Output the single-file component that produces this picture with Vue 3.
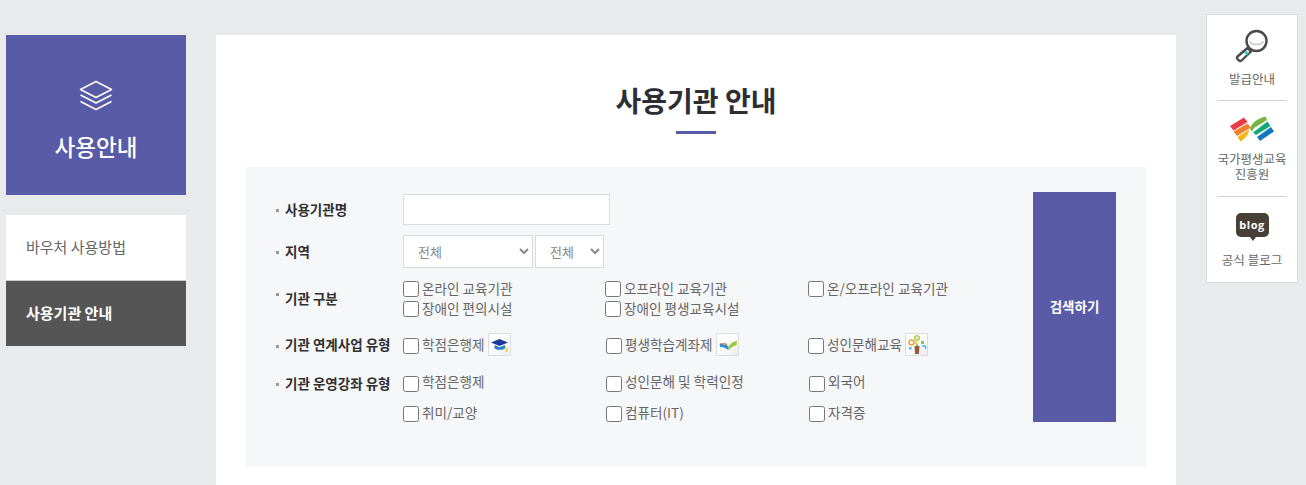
<script setup>
const types = [
  ['온라인 교육기관', '오프라인 교육기관', '온/오프라인 교육기관'],
  ['장애인 편의시설', '장애인 평생교육시설', '']
]
const courses = [
  ['학점은행제', '성인문해 및 학력인정', '외국어'],
  ['취미/교양', '컴퓨터(IT)', '자격증']
]
</script>

<template>
  <div class="page">
    <aside class="side">
      <div class="side-head">
        <svg class="layers" width="36" height="32" viewBox="0 0 36 32" fill="none" stroke="#fff" stroke-width="1.5" stroke-linejoin="round">
          <path d="M18 1.5 33.5 9.5 18 17.5 2.5 9.5Z" />
          <path d="M2.5 15 18 23 33.5 15" />
          <path d="M2.5 21.5 18 29.5 33.5 21.5" />
        </svg>
        <h2>사용안내</h2>
      </div>
      <nav class="side-nav">
        <a class="nav-item">바우처 사용방법</a>
        <a class="nav-item active">사용기관 안내</a>
      </nav>
    </aside>

    <main class="content">
      <h1>사용기관 안내</h1>
      <div class="rule"></div>
      <section class="panel">
        <form class="fields" @submit.prevent>
          <div class="row row-name">
            <label class="lab">사용기관명</label>
            <input class="text-input" type="text" />
          </div>
          <div class="row row-area">
            <label class="lab">지역</label>
            <div class="selects">
              <select class="sel sel-a"><option>전체</option></select>
              <select class="sel sel-b"><option>전체</option></select>
            </div>
          </div>
          <div class="row row-type">
            <label class="lab lab-type">기관 구분</label>
            <div class="opts">
              <div v-for="(r, i) in types" :key="i" class="opt-row type-row">
                <label v-for="(t, j) in r" :key="j" class="opt">
                  <template v-if="t"><input type="checkbox" /><span>{{ t }}</span></template>
                </label>
              </div>
            </div>
          </div>
          <div class="row row-link">
            <label class="lab">기관 연계사업 유형</label>
            <div class="opt-row link-row">
              <label class="opt">
                <input type="checkbox" /><span>학점은행제</span>
                <i class="tile">
                  <svg width="21" height="21" viewBox="0 0 21 21">
                    <path d="M2 8.500 10.500 5 19 8.500 10.500 12Z" fill="#1a3a9a" />
                    <path d="M5.500 11v3.200c2 2 8.500 2 10.500 0V11l-5.500 2.200Z" fill="#2c7cc8" />
                    <rect x="16.500" y="13" width="2" height="5" fill="#f2d04e" />
                  </svg>
                </i>
              </label>
              <label class="opt">
                <input type="checkbox" /><span>평생학습계좌제</span>
                <i class="tile">
                  <svg width="21" height="21" viewBox="0 0 21 21">
                    <path d="M2.500 9.500 7 9 11.500 12.500 11.500 16 7 13.500 3 13Z" fill="#2a8fd4" />
                    <path d="M4 9.300 7 8.800 10 11 6.500 11Z" fill="#f0a030" />
                    <path d="M7.500 9 9.500 9.800 10 11 8 10.500Z" fill="#e0508a" />
                    <path d="M11.500 12.500 14.500 9 20 6.500 19.500 11 15 13 11.500 16Z" fill="#9cc83c" />
                  </svg>
                </i>
              </label>
              <label class="opt">
                <input type="checkbox" /><span>성인문해교육</span>
                <i class="tile">
                  <svg width="21" height="21" viewBox="0 0 21 21">
                    <path d="M8.500 12h5l-.6 8h-3.800Z" fill="#9a5a34" />
                    <path d="M10 10.500 12 10.500 11.500 12.500 10.500 12.500Z" fill="#6b8f3a" />
                    <circle cx="5.500" cy="8.500" r="2.500" fill="none" stroke="#f0a83c" stroke-width="1.600" />
                    <circle cx="11" cy="4" r="2.200" fill="none" stroke="#a8d050" stroke-width="1.600" />
                    <rect x="15" y="7" width="3" height="3" fill="#8cc63f" />
                    <rect x="9" y="7.500" width="2.500" height="2.500" fill="#f2d04e" />
                    <path d="M16 12h3.500v3" fill="none" stroke="#4fb8e0" stroke-width="1.500" />
                    <rect x="3" y="13" width="2.500" height="2.500" fill="#4fb8e0" />
                  </svg>
                </i>
              </label>
            </div>
          </div>
          <div class="row row-course">
            <label class="lab">기관 운영강좌 유형</label>
            <div class="opts">
              <div v-for="(r, i) in courses" :key="i" class="opt-row course-row">
                <label v-for="t in r" :key="t" class="opt"><input type="checkbox" /><span>{{ t }}</span></label>
              </div>
            </div>
          </div>
        </form>
        <button class="search" type="button">검색하기</button>
      </section>
    </main>

    <aside class="quick">
      <a class="quick-item">
        <svg width="36" height="34" viewBox="0 0 36 34" fill="none">
          <circle cx="22.500" cy="12" r="10" fill="#fff" stroke="#4a4a4a" stroke-width="2.400" />
          <path d="M15.500 12.500a8 6 0 0 0 14 0" stroke="#c9c9c9" stroke-width="1.500" />
          <path d="M13.500 19 3.500 27.500a2 2 0 0 0 0 2.500l1.500 1.500a2 2 0 0 0 2.500 0L17 22.500Z" fill="#fff" stroke="#4a4a4a" stroke-width="2.400" stroke-linejoin="round" />
          <path d="M11 22.500 14 25.500" stroke="#35c4c9" stroke-width="2.500" />
        </svg>
        <span>발급안내</span>
      </a>
      <a class="quick-item">
        <svg class="nile" width="46" height="28" viewBox="0 0 46 28">
          <path d="M1 12 15 3.500 18.500 8 4.500 16.500Z" fill="#ec3b46" />
          <path d="M4.500 17.500 18.500 9.500 22 13.500 8 22Z" fill="#f47f2d" />
          <path d="M8.500 23 20 15.500 C20 20 17 24 11.500 27.500Z" fill="#f8b61c" />
          <path d="M21 15C23 9 27 5 36.500 2.500L38 6 25 14 23 17.500Z" fill="#74b73f" />
          <path d="M24 18.500 38.500 7.500 41.500 12 27 21Z" fill="#12a879" />
          <path d="M28 23 42 13 45 17.500 31 27Z" fill="#1277bf" />
        </svg>
        <span class="two"><em>국가평생교육</em><em>진흥원</em></span>
      </a>
      <a class="quick-item">
        <div class="bubble"><b>blog</b></div>
        <span>공식 블로그</span>
      </a>
    </aside>
  </div>
</template>

<style>
html, body { margin: 0; background: #e9eaec; }
</style>

<style scoped>
.page {
  display: flex;
  align-items: flex-start;
  gap: 30px;
  height: 485px;
  overflow: hidden;
  padding-left: 6px;
  box-sizing: border-box;
  background: #e9eaec;
  font-family: "Noto Sans CJK KR", "Noto Sans", sans-serif;
  color: #666;
}
.side { width: 180px; margin-top: 35px; flex: none; }
.side-head {
  height: 160px;
  background: #5a5ba6;
  color: #fff;
  display: flex;
  flex-direction: column;
  align-items: center;
}
.layers { margin-top: 45px; }
.side-head h2 {
  margin: 18px 0 0;
  font-size: 22.500px;
  font-weight: 500;
  line-height: 32px;
}
.side-nav { margin-top: 20px; display: flex; flex-direction: column; }
.nav-item {
  height: 65px;
  line-height: 63px;
  padding-left: 20px;
  background: #fff;
  font-size: 15px;
  color: #666;
  border-bottom: 1px solid #ccc;
}
.nav-item.active {
  background: #555;
  color: #fff;
  font-weight: 700;
  border-bottom: 0;
}
.content {
  width: 960px;
  height: 450px;
  margin-top: 35px;
  flex: none;
  background: #fff;
  box-sizing: border-box;
  padding: 0 30px;
}
h1 {
  margin: 43px 0 0;
  text-align: center;
  font-size: 28px;
  font-weight: 700;
  line-height: 44px;
  color: #2c2e33;
}
.rule { width: 40px; height: 3px; background: #5a5ba6; margin: 9px auto 33px; }
.panel {
  height: 300px;
  box-sizing: border-box;
  background: #f6f7f9;
  padding: 25px 30px 45px 30px;
  display: flex;
  justify-content: space-between;
  align-items: flex-start;
}
.fields { margin-top: 2px; width: 710px; }
.row { display: flex; align-items: center; }
.lab {
  width: 127px;
  flex: none;
  box-sizing: border-box;
  padding-left: 9px;
  padding-bottom: 2px;
  position: relative;
  font-size: 13.500px;
  font-weight: 700;
  color: #2f2f2f;
  white-space: nowrap;
}
.lab::before {
  content: "";
  position: absolute;
  left: 0;
  top: 50%;
  width: 3px;
  height: 3px;
  margin-top: -1px;
  background: #999;
}
.row-name { height: 31px; }
.text-input {
  width: 207px;
  height: 31px;
  box-sizing: border-box;
  border: 1px solid #d8dbe0;
  background: #fff;
  padding: 0 10px;
  border-radius: 0;
  outline: none;
}
.row-area { height: 33px; margin-top: 10px; }
.selects { display: flex; gap: 2px; }
.sel {
  height: 33px;
  box-sizing: border-box;
  border: 1px solid #d8dbe0;
  border-radius: 0;
  background: #fff;
  color: #888;
  font-family: inherit;
  font-size: 13px;
}
.sel-a { width: 130px; padding-left: 10px; }
.sel-b { width: 69px; padding-left: 10px; }
.row-type { margin-top: 11px; }
.lab-type { margin-top: -1px; }
.lab-type::before { margin-top: -6px; }
.opt-row { display: grid; grid-template-columns: 202px 203px 200px; }
.type-row { height: 20px; align-items: center; }
.opt {
  display: flex;
  align-items: center;
  gap: 3px;
  font-size: 13.600px;
  color: #666;
  white-space: nowrap;
}
.opt input {
  width: 16px;
  height: 16px;
  margin: 0;
  flex: none;
}
.opt span { position: relative; top: -1px; line-height: 20px; }
.row-link { margin-top: 15px; height: 23px; }
.row-link .lab { padding-bottom: 4px; }
.row-link .opt span { top: -2px; }
.link-row { grid-template-columns: 203px 202px 200px; width: 605px; }
.tile {
  display: block;
  width: 23px;
  height: 23px;
  box-sizing: border-box;
  border: 1px solid #ddd;
  background: linear-gradient(135deg, #fff 40%, #ececec);
  margin-left: 0;
  margin-top: -2px;
}
.tile svg { display: block; }
.row-course { margin-top: 19px; align-items: flex-start; }
.row-course .lab { line-height: 20px; margin-top: -3px; }
.row-course .opt span { top: -2px; }
.course-row:first-child .opt span { top: -3px; }
.course-row { grid-template-columns: 203px 203px 200px; height: 30px; }
.course-row .opt { height: 16px; }
.search {
  width: 83px;
  height: 230px;
  flex: none;
  border: 0;
  background: #5a5ba6;
  color: #fff;
  font-family: inherit;
  font-size: 13.500px;
  font-weight: 700;
  padding: 0 0 2px;
}
.quick {
  width: 92px;
  height: 269px;
  margin-top: 14px;
  flex: none;
  box-sizing: border-box;
  background: #fff;
  border: 1px solid #d9dce1;
  padding: 0 10px;
  display: flex;
  flex-direction: column;
}
.quick-item {
  display: flex;
  flex-direction: column;
  align-items: center;
  text-align: center;
  font-size: 12.500px;
  line-height: 15px;
  color: #666;
  border-bottom: 1px solid #d5d5d5;
  white-space: nowrap;
}
.quick-item:nth-child(1) { height: 86px; padding-top: 14px; box-sizing: border-box; }
.quick-item:nth-child(1) span { margin-top: 8px; }
.quick-item:nth-child(2) { height: 96px; padding-top: 13px; box-sizing: border-box; }
.quick-item:nth-child(2) span { margin-top: 9px; }
.two { display: flex; flex-direction: column; }
.two em { font-style: normal; display: block; }
.quick-item:nth-child(3) { border-bottom: 0; padding-top: 16px; }
.quick-item:nth-child(3) span { margin-top: 15px; }
.bubble {
  width: 33px;
  height: 24px;
  border-radius: 5px;
  background: #483f37;
  position: relative;
  display: flex;
  align-items: center;
  justify-content: center;
}
.bubble::after {
  content: "";
  position: absolute;
  left: 14px;
  bottom: -4px;
  border: 3px solid transparent;
  border-top: 4px solid #483f37;
  border-bottom: 0;
}
.bubble b {
  color: #fff;
  font-family: "Open Sans", sans-serif;
  font-size: 11px;
  font-weight: 700;
  line-height: 12px;
  letter-spacing: .5px;
}
</style>
